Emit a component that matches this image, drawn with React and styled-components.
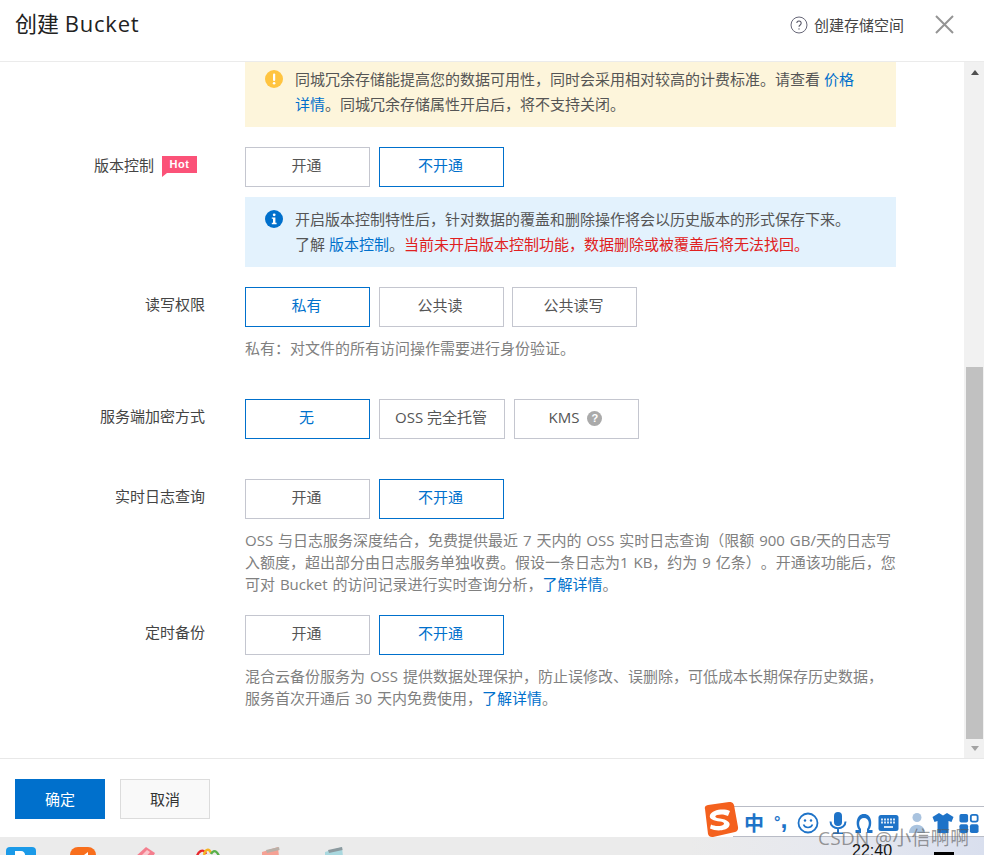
import React from "react";
import styled, { createGlobalStyle } from "styled-components";

const FONT = `"Open Sans", "Noto Sans CJK SC", sans-serif`;

const Global = createGlobalStyle`
  html, body { margin: 0; padding: 0; background: #fff; overflow: hidden; }
  * { box-sizing: border-box; }
`;

const Page = styled.div`
  position: relative;
  width: 984px;
  height: 855px;
  overflow: hidden;
  display: flex;
  flex-direction: column;
  font-family: ${FONT};
  font-size: 15px;
  color: #333;
  text-spacing-trim: space-all;
`;

const Header = styled.header`
  height: 62px;
  flex: none;
  display: flex;
  align-items: flex-start;
  justify-content: space-between;
  padding: 7px 30px 0 15px;
  border-bottom: 1px solid #ebebeb;
`;
const Title = styled.h1`
  margin: 0;
  font-size: 22px;
  line-height: 32px;
  font-weight: 400;
  color: #222;
`;
const TitleLatin = styled.span`
  letter-spacing: 0.8px;
`;
const HeaderTools = styled.div`
  display: flex;
  align-items: center;
  height: 33px;
  margin-top: 1px;
`;
const CreateLink = styled.span`
  display: flex;
  align-items: center;
  gap: 6px;
  margin-right: 31px;
  color: #444;
  line-height: 18px;
`;

const Middle = styled.div`
  height: 697px;
  flex: none;
  display: flex;
  border-bottom: 1px solid #e8e8e8;
`;
const Content = styled.main`
  flex: 1;
  overflow: hidden;
  padding-right: 68px;
`;
const Scrollbar = styled.div`
  width: 20px;
  flex: none;
  background: #f1f1f1;
  display: flex;
  flex-direction: column;
  align-items: center;
  padding: 0 1px 0 2px;
`;
const Arrow = styled.div`
  flex: none;
  width: 0;
  height: 0;
  border-left: 4.5px solid transparent;
  border-right: 4.5px solid transparent;
  ${p => (p.$down
    ? "border-top: 5px solid #a3a3a3; margin: 7px 0;"
    : "border-bottom: 5px solid #505050; margin: 8px 0 0;")}
`;
const Track = styled.div`
  flex: 1;
  width: 100%;
  display: flex;
  align-items: flex-end;
`;
const Thumb = styled.div`
  width: 100%;
  height: 372px;
  background: #c1c1c1;
`;

const Row = styled.section`
  display: grid;
  grid-template-columns: 205px 1fr;
  column-gap: 40px;
  margin-top: ${p => p.$top || 0}px;
`;
const Label = styled.div`
  display: flex;
  justify-content: flex-end;
  align-items: flex-start;
  line-height: 20px;
  padding-top: ${p => (p.$hot ? 8 : 7)}px;
  color: #444;
  margin-right: ${p => (p.$hot ? 8 : 0)}px;
  gap: 8px;
  white-space: nowrap;
`;
const Hot = styled.span`
  position: relative;
  display: block;
  width: 35px;
  height: 17px;
  margin-top: 1px;
  background: #fb5278;
  color: #fff;
  font: 700 11px/17px "Liberation Sans", sans-serif;
  letter-spacing: 0.6px;
  text-align: center;
  &::after {
    content: "";
    position: absolute;
    left: 0;
    top: 17px;
    border-top: 4px solid #fb5278;
    border-right: 5px solid transparent;
  }
`;
const Buttons = styled.div`
  display: flex;
  gap: ${p => p.$gap || 9}px;
`;
const Option = styled.button`
  width: ${p => p.$w || 125}px;
  height: 40px;
  padding: 0 2px 5px 0;
  font: inherit;
  background: #fff;
  display: flex;
  align-items: center;
  justify-content: center;
  gap: 8px;
  border: 1px solid ${p => (p.$on ? "#0070cc" : "#c4c6cf")};
  color: ${p => (p.$on ? "#0070cc" : "#555")};
`;
const Notice = styled.div`
  display: flex;
  height: ${p => p.$h}px;
  margin-top: ${p => p.$top || 0}px;
  margin-left: 245px;
  padding: ${p => (p.$kind === "warn" ? 5 : 10)}px 36px 0 20px;
  gap: 12px;
  background: ${p => (p.$kind === "warn" ? "#fdf5db" : "#e3f2fd")};
  color: #555;
  line-height: 25px;
`;
const NoticeIcon = styled.svg`
  flex: none;
  width: 18px;
  height: 18px;
  margin-top: 3px;
`;
const Link = styled.a`
  color: #0070cc;
`;
const Danger = styled.span`
  color: #e02020;
`;
const Help = styled.p`
  margin: 10px 0 0;
  color: #808080;
  line-height: 22px;
  word-spacing: 1px;
  white-space: nowrap;
`;
const QMark = styled.span`
  width: 15px;
  height: 15px;
  margin-top: 4px;
  border-radius: 50%;
  background: #aaa;
  color: #fff;
  font: 700 11px/15px "Liberation Sans", sans-serif;
  text-align: center;
`;

const Footer = styled.footer`
  height: 78px;
  flex: none;
  padding: 20px 0 0 15px;
  display: flex;
  gap: 15px;
  align-items: flex-start;
`;
const Primary = styled.button`
  width: 90px;
  height: 40px;
  border: 0;
  padding: 0 0 2px;
  font: inherit;
  background: #0070cc;
  color: #fff;
`;
const Secondary = styled.button`
  width: 90px;
  height: 40px;
  padding: 0 0 2px;
  font: inherit;
  background: #f9f9f9;
  border: 1px solid #dcdcdc;
  color: #333;
`;

const Taskbar = styled.div`
  flex: 1;
  position: relative;
  overflow: hidden;
  background: linear-gradient(90deg, #ebebeb 0%, #ebebeb 70%, #e6e8ef 85%, #d9dfee 100%);
  display: flex;
  align-items: flex-start;
  padding: 10px 0 0 6px;
`;
const TaskIcon = styled.svg`
  display: block;
  flex: none;
  width: ${p => p.$w}px;
  height: 20px;
  margin-right: ${p => p.$gap}px;
`;
const Clock = styled.div`
  position: absolute;
  left: 852px;
  top: 4px;
  font: 16px/20px "Liberation Sans", sans-serif;
  color: #111;
`;
const BlackBar = styled.div`
  position: absolute;
  left: 934px;
  top: 15px;
  width: 20px;
  height: 4px;
  background: #000;
`;

const Ime = styled.div`
  position: absolute;
  left: 733px;
  top: 806px;
  width: 251px;
  height: 31px;
  background: #fff;
  border-top: 1px solid #b9bcc6;
  border-bottom: 1px solid #b9bcc6;
  display: flex;
  align-items: center;
  padding: 2px 0 0 11px;
`;
const ImeChar = styled.span`
  width: 20px;
  font: 700 20px/28px "Noto Sans CJK SC", sans-serif;
  color: #1e73c8;
  margin-right: 10px;
`;
const ImePunct = styled.span`
  width: 18px;
  margin-right: 5px;
  font: 700 16px/22px "Liberation Sans", sans-serif;
  color: #1e73c8;
  white-space: nowrap;
`;
const ImeComma = styled.span`
  font-size: 25px;
  line-height: 10px;
`;
const ImeSvg = styled.svg`
  display: block;
  flex: none;
  width: ${p => p.$w || 22}px;
  height: 22px;
  margin-right: ${p => p.$gap ?? 5}px;
`;
const ImeLogo = styled.svg`
  position: absolute;
  left: 701px;
  top: 802px;
  width: 38px;
  height: 36px;
`;
const Watermark = styled.div`
  position: absolute;
  left: 818px;
  top: 825px;
  font-size: 19px;
  line-height: 26px;
  color: rgba(90, 90, 90, 0.62);
  letter-spacing: 0.3px;
  white-space: nowrap;
`;

const Opts = ({ on }) => (
  <Buttons>
    <Option $on={on === 0}>开通</Option>
    <Option $on={on === 1}>不开通</Option>
  </Buttons>
);

export default function App() {
  return (
    <Page>
      <Global />
      <Header>
        <Title>
          创建 <TitleLatin>Bucket</TitleLatin>
        </Title>
        <HeaderTools>
          <CreateLink>
            <svg width="18" height="18" viewBox="0 0 18 18" fill="none">
              <circle cx="9" cy="9" r="8" stroke="#667" strokeWidth="1" />
              <path d="M6.8 7.1a2.2 2.2 0 1 1 3.4 1.9c-.8.5-1.2.9-1.2 1.8" stroke="#556" strokeWidth="1.1" />
              <circle cx="9" cy="12.9" r=".7" fill="#556" />
            </svg>
            创建存储空间
          </CreateLink>
          <svg width="19" height="19" viewBox="0 0 19 19">
            <path d="M1 1l17 17M18 1L1 18" stroke="#949494" strokeWidth="2" />
          </svg>
        </HeaderTools>
      </Header>

      <Middle>
        <Content>
          <Notice $kind="warn" $h={65}>
            <NoticeIcon viewBox="0 0 18 18">
              <circle cx="9" cy="9" r="9" fill="#ffc440" />
              <rect x="8" y="3.5" width="2.2" height="7.5" rx="1" fill="#fff" />
              <circle cx="9.1" cy="13.3" r="1.3" fill="#fff" />
            </NoticeIcon>
            <div>
              同城冗余存储能提高您的数据可用性，同时会采用相对较高的计费标准。请查看 <Link>价格详情</Link>。同城冗余存储属性开启后，将不支持关闭。
            </div>
          </Notice>

          <Row $top={20}>
            <Label $hot>
              版本控制
              <Hot>Hot</Hot>
            </Label>
            <Opts on={1} />
          </Row>
          <Notice $kind="info" $h={70} $top={10}>
            <NoticeIcon viewBox="0 0 18 18">
              <circle cx="9" cy="9" r="9" fill="#0070cc" />
              <circle cx="9.2" cy="4.8" r="1.4" fill="#fff" />
              <path d="M6.8 7.4h3.6v5.4h1.2v1.4H6.8v-1.4H8v-4H6.8z" fill="#fff" />
            </NoticeIcon>
            <div>
              开启版本控制特性后，针对数据的覆盖和删除操作将会以历史版本的形式保存下来。
              <br />
              了解 <Link>版本控制</Link>。<Danger>当前未开启版本控制功能，数据删除或被覆盖后将无法找回。</Danger>
            </div>
          </Notice>

          <Row $top={20}>
            <Label>读写权限</Label>
            <Buttons $gap={8.5}>
              <Option $on>私有</Option>
              <Option>公共读</Option>
              <Option>公共读写</Option>
            </Buttons>
          </Row>
          <Row>
            <span />
            <Help>私有：对文件的所有访问操作需要进行身份验证。</Help>
          </Row>

          <Row $top={40}>
            <Label>服务端加密方式</Label>
            <Buttons>
              <Option $on>无</Option>
              <Option $w={126}>OSS 完全托管</Option>
              <Option>
                KMS
                <QMark>?</QMark>
              </Option>
            </Buttons>
          </Row>

          <Row $top={40}>
            <Label>实时日志查询</Label>
            <Opts on={1} />
          </Row>
          <Row>
            <span />
            <Help>
              OSS 与日志服务深度结合，免费提供最近 7 天内的 OSS 实时日志查询（限额 900 GB/天的日志写
              <br />
              入额度，超出部分由日志服务单独收费。假设一条日志为1 KB，约为 9 亿条）。开通该功能后，您
              <br />
              可对 Bucket 的访问记录进行实时查询分析，<Link>了解详情</Link>。
            </Help>
          </Row>

          <Row $top={20}>
            <Label>定时备份</Label>
            <Opts on={1} />
          </Row>
          <Row>
            <span />
            <Help>
              混合云备份服务为 OSS 提供数据处理保护，防止误修改、误删除，可低成本长期保存历史数据，
              <br />
              服务首次开通后 30 天内免费使用，<Link>了解详情</Link>。
            </Help>
          </Row>
        </Content>
        <Scrollbar>
          <Arrow />
          <Track>
            <Thumb />
          </Track>
          <Arrow $down />
        </Scrollbar>
      </Middle>

      <Footer>
        <Primary>确定</Primary>
        <Secondary>取消</Secondary>
      </Footer>

      <Taskbar>
        <TaskIcon $w={30} $gap={34} viewBox="0 0 30 20">
          <rect width="30" height="20" rx="4" fill="#1b9ae8" />
          <path d="M9 4h6c5 0 6 8 0 8H9z" fill="#fff" />
        </TaskIcon>
        <TaskIcon $w={26} $gap={39} viewBox="0 0 26 20">
          <rect width="26" height="20" rx="8" fill="#f86e1c" />
          <path d="M14 8l4-3v6z" fill="#fff" />
        </TaskIcon>
        <TaskIcon $w={20} $gap={40} viewBox="0 0 20 20">
          <path d="M0 10L11 0l9 6-8 14H4z" fill="#f47f8e" />
          <path d="M6 9l6-6 3 2-6 7z" fill="#fbc6cc" />
        </TaskIcon>
        <TaskIcon $w={26} $gap={39} viewBox="0 0 26 20" fill="none">
          <path d="M1 14C2 3 9 1 11 7" stroke="#e8262a" strokeWidth="2.4" />
          <path d="M9 8c1-6 5-7 7-2" stroke="#f5b324" strokeWidth="2.4" />
          <path d="M16 7c3-6 8-2 9 7" stroke="#58b04a" strokeWidth="2.4" />
        </TaskIcon>
        <TaskIcon $w={20} $gap={45} viewBox="0 0 20 20">
          <path d="M2 5L18 0l2 20H2z" fill="#f5a194" />
          <path d="M6 3l13-3 .6 3L7 6z" fill="#b9b0a8" />
        </TaskIcon>
        <TaskIcon $w={20} $gap={0} viewBox="0 0 20 20">
          <path d="M0 5L17 0l2 20H0z" fill="#a9d8df" />
          <path d="M3 3l14-3 .6 3L4 6z" fill="#8c9a9f" />
        </TaskIcon>
        <Clock>22:40</Clock>
        <BlackBar />
      </Taskbar>

      <Ime>
        <ImeChar>中</ImeChar>
        <ImePunct>
          °<ImeComma>,</ImeComma>
        </ImePunct>
        <ImeSvg viewBox="0 0 22 22" fill="none" $gap={8}>
          <circle cx="11" cy="11" r="9.5" stroke="#1e73c8" strokeWidth="1.8" />
          <circle cx="8" cy="8.5" r="1.2" fill="#1e73c8" />
          <circle cx="14" cy="8.5" r="1.2" fill="#1e73c8" />
          <path d="M6.5 12.5c1.5 4 7.5 4 9 0" stroke="#1e73c8" strokeWidth="1.6" />
        </ImeSvg>
        <ImeSvg viewBox="0 0 22 22" fill="none" $gap={4}>
          <rect x="7" y="0" width="8" height="14" rx="4" fill="#1e73c8" />
          <path d="M3.5 9.5c0 9 15 9 15 0M11 17v4M6 21.5h10" stroke="#1e73c8" strokeWidth="2" />
        </ImeSvg>
        <ImeSvg viewBox="0 0 22 22" fill="none" $gap={3}>
          <path d="M8 21H2.5v-3H6C2 13 3 2 11 2c8 0 9 11 5 16h3.500v3H14v-4c3-4 2.500-11-3-11S5 13 8 17z" fill="#1e73c8" />
        </ImeSvg>
        <ImeSvg viewBox="0 0 21 22" fill="none" $w={21} $gap={7}>
          <rect x="0.5" y="3" width="20" height="16" rx="2.5" fill="#1e73c8" />
          <path d="M3 7.5h15M3 10.5h15" stroke="#d5e6f7" strokeWidth="1.8" strokeDasharray="2 1" />
          <path d="M6 15h9" stroke="#d5e6f7" strokeWidth="2" />
        </ImeSvg>
        <ImeSvg viewBox="0 0 22 22" $gap={4}>
          <circle cx="11" cy="5.5" r="4.5" fill="#a9c3df" />
          <path d="M3 21c0-11 16-11 16 0z" fill="#a9c3df" />
        </ImeSvg>
        <ImeSvg viewBox="0 0 22 22" $gap={5}>
          <path d="M7 1l4 2.5L15 1l6.5 4-2 5-3-1v12H5.5V9l-3 1-2-5z" fill="#1e73c8" />
        </ImeSvg>
        <ImeSvg viewBox="0 0 22 22" fill="none" $w={20} $gap={0}>
          <rect x="0.5" y="1" width="9.5" height="9.5" rx="2" fill="#1e73c8" />
          <rect x="13" y="2" width="7.5" height="7.5" rx="2" stroke="#1e73c8" strokeWidth="2" />
          <rect x="0.5" y="12.5" width="9.5" height="9.5" rx="2" fill="#1e73c8" />
          <rect x="12" y="12.5" width="9.5" height="9.5" rx="2" fill="#1e73c8" />
        </ImeSvg>
      </Ime>
      <ImeLogo viewBox="0 0 38 36">
        <path d="M4 7q-1-3 3-4L28 0q4-.5 5 3l4 22q.5 4-3 5L12 35q-4 .5-5-3z" fill="#f4611e" />
        <path d="M29 9C22 6 11 8 9 13c-1.500 4 4 6 10 6.500 5 .5 5 3 2 4-4 1-8 .5-11-1l-1 4c6 3 16 2.500 19-2 2.500-4-2-7-9-8-5-.5-6-2.500-3-3.500 4-1 8-.5 11 1z" fill="#fff" />
      </ImeLogo>
      <Watermark>CSDN @小信啊啊</Watermark>
    </Page>
  );
}
